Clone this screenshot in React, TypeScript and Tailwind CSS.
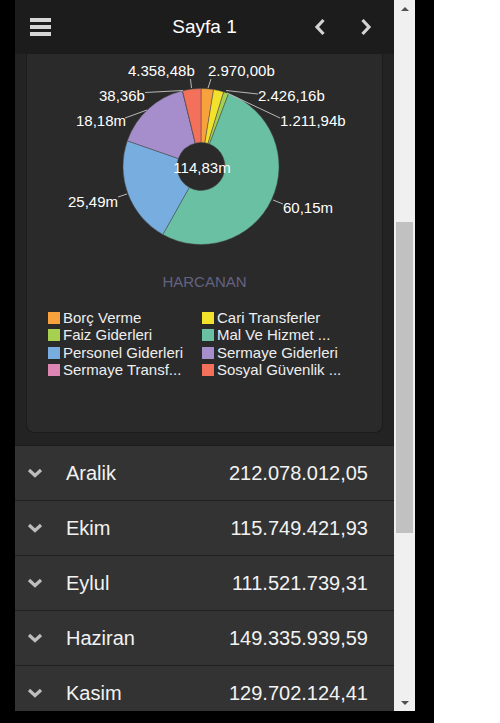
const font = { fontFamily: '"Liberation Sans", Arial, sans-serif' };

type Slice = { name: string; value: number; color: string };

const slices: Slice[] = [
  { name: 'Borç Verme', value: 2.97, color: '#f7a23c' },
  { name: 'Cari Transferler', value: 2.42616, color: '#f3e22c' },
  { name: 'Faiz Giderleri', value: 1.21194, color: '#a7d050' },
  { name: 'Mal Ve Hizmet ...', value: 60.15, color: '#69c0a3' },
  { name: 'Personel Giderleri', value: 25.49, color: '#78aedf' },
  { name: 'Sermaye Giderleri', value: 18.18, color: '#a68dcb' },
  { name: 'Sermaye Transf...', value: 0.03836, color: '#dd86b3' },
  { name: 'Sosyal Güvenlik ...', value: 4.35848, color: '#f3705a' },
];

const labels = [
  { text: '4.358,48b', x: 128, y: 70, line: [191.5, 88, 190.5, 79] },
  { text: '2.970,00b', x: 208, y: 70, line: [208, 88, 211, 79] },
  { text: '38,36b', x: 99, y: 95, line: [183, 90.5, 145, 92.5] },
  { text: '2.426,16b', x: 258, y: 95, line: [226, 90.5, 258, 94] },
  { text: '18,18m', x: 76, y: 120, line: [147, 110, 125, 118] },
  { text: '1.211,94b', x: 280, y: 120, line: [227, 93, 280, 118] },
  { text: '25,49m', x: 68, y: 201, line: [127, 194, 118, 197] },
  { text: '60,15m', x: 283, y: 207, line: [273, 200, 283, 204] },
];

const months = [
  { name: 'Aralik', total: '212.078.012,05' },
  { name: 'Ekim', total: '115.749.421,93' },
  { name: 'Eylul', total: '111.521.739,31' },
  { name: 'Haziran', total: '149.335.939,59' },
  { name: 'Kasim', total: '129.702.124,41' },
];

function point(cx: number, cy: number, r: number, deg: number) {
  const rad = (deg * Math.PI) / 180;
  return [cx + r * Math.sin(rad), cy - r * Math.cos(rad)];
}

function arcPath(cx: number, cy: number, r: number, r0: number, a0: number, a1: number) {
  const large = a1 - a0 > 180 ? 1 : 0;
  const [x0, y0] = point(cx, cy, r, a0);
  const [x1, y1] = point(cx, cy, r, a1);
  const [x2, y2] = point(cx, cy, r0, a1);
  const [x3, y3] = point(cx, cy, r0, a0);
  return `M${x0} ${y0} A${r} ${r} 0 ${large} 1 ${x1} ${y1} L${x2} ${y2} A${r0} ${r0} 0 ${large} 0 ${x3} ${y3} Z`;
}

function DonutChart() {
  const total = slices.reduce((s, x) => s + x.value, 0);
  let angle = 0;
  const cx = 201;
  const cy = 166.5;

  return (
    <svg width={355} height={210} viewBox="27 54 355 210" className="block">
      {slices.map((s) => {
        const a0 = angle;
        const a1 = angle + (s.value / total) * 360;
        angle = a1;
        return (
          <path
            key={s.name}
            d={arcPath(cx, cy, 78, 24, a0, a1)}
            fill={s.color}
            stroke="#4a4a4a"
            strokeWidth={0.5}
          />
        );
      })}
      {labels.map((l) => (
        <g key={l.text}>
          <line x1={l.line[0]} y1={l.line[1]} x2={l.line[2]} y2={l.line[3]} stroke="#b8b8b8" strokeWidth={1} />
          <text x={l.x} y={l.y} fill="#ffffff" fontSize={15} dominantBaseline="central" style={font}>
            {l.text}
          </text>
        </g>
      ))}
      <text x={202} y={167} fill="#ffffff" fontSize={15} textAnchor="middle" dominantBaseline="central" style={font}>
        114,83m
      </text>
    </svg>
  );
}

function Chevron({ dir }: { dir: 'left' | 'right' }) {
  return (
    <svg width={12} height={18} viewBox="0 0 12 18">
      <polyline
        points={dir === 'left' ? '9.5,2 3,9 9.5,16' : '2.5,2 9,9 2.5,16'}
        fill="none"
        stroke="#d4d4d4"
        strokeWidth={3.2}
      />
    </svg>
  );
}

function Header() {
  return (
    <div className="h-[54px] shrink-0 bg-[#1c1c1c] grid grid-cols-[1fr_auto_1fr] items-center">
      <div className="ml-[15px] w-[21px] flex flex-col gap-[3.5px]">
        <div className="h-[3.5px] bg-[#d6d6d6]" />
        <div className="h-[3.5px] bg-[#d6d6d6]" />
        <div className="h-[3.5px] bg-[#d6d6d6]" />
      </div>
      <div className="text-center text-white text-[19px]" style={font}>
        Sayfa 1
      </div>
      <div className="flex items-center justify-end gap-[34px] mr-[22px]">
        <Chevron dir="left" />
        <Chevron dir="right" />
      </div>
    </div>
  );
}

function ChartCard() {
  return (
    <div className="bg-[#232323] px-[11px] pb-[12px] border-b border-[#1d1d1d] shrink-0">
      <div className="bg-[#2a2a2a] border border-t-0 border-[#1c1c1c] rounded-b-[8px] h-[379px] flex flex-col">
        <DonutChart />
        <div className="text-center text-[15px] leading-[18px] text-[#636380] mt-[9px]" style={font}>
          HARCANAN
        </div>
        <div className="grid grid-cols-[154px_154px] ml-[21px] mt-[18px]">
          {slices.map((s) => (
            <div key={s.name} className="flex items-center h-[17.5px] gap-[3px]">
              <div className="w-[12px] h-[12px]" style={{ backgroundColor: s.color }} />
              <span className="text-[15px] text-[#eeeeee] whitespace-nowrap" style={font}>
                {s.name}
              </span>
            </div>
          ))}
        </div>
      </div>
    </div>
  );
}

function MonthRow({ name, total }: { name: string; total: string }) {
  return (
    <div className="h-[55px] shrink-0 bg-[#333333] border-b border-[#202020] flex items-center pl-[12px] pr-[26px]">
      <svg width={16} height={10} viewBox="0 0 16 10" className="shrink-0">
        <polyline points="2,2 8,7.5 14,2" fill="none" stroke="#bdbdbd" strokeWidth={3.2} />
      </svg>
      <span className="ml-[23px] text-[20px] text-[#f2f2f2]" style={font}>
        {name}
      </span>
      <span className="ml-auto text-[20px] text-[#f2f2f2]" style={font}>
        {total}
      </span>
    </div>
  );
}

function Scrollbar() {
  return (
    <div className="w-[21px] bg-[#f0f0f0] flex flex-col items-center shrink-0">
      <div className="h-[17px] flex items-center justify-center">
        <div className="w-0 h-0 border-l-[4px] border-r-[4px] border-b-[4px] border-l-transparent border-r-transparent border-b-[#505050]" />
      </div>
      <div className="h-[205px]" />
      <div className="w-[17px] h-[311px] bg-[#c1c1c1]" />
      <div className="flex-1" />
      <div className="h-[17px] flex items-center justify-center">
        <div className="w-0 h-0 border-l-[4px] border-r-[4px] border-t-[4px] border-l-transparent border-r-transparent border-t-[#505050]" />
      </div>
    </div>
  );
}

export default function App() {
  return (
    <div className="w-full h-[723px] bg-white overflow-hidden">
      <div className="w-[434px] h-[723px] bg-black pl-[15px] pr-[19px] pb-[12px]">
        <div className="flex h-[711px]">
          <div className="w-[379px] flex flex-col overflow-hidden">
            <Header />
            <ChartCard />
            {months.map((m) => (
              <MonthRow key={m.name} name={m.name} total={m.total} />
            ))}
          </div>
          <Scrollbar />
        </div>
      </div>
    </div>
  );
}
